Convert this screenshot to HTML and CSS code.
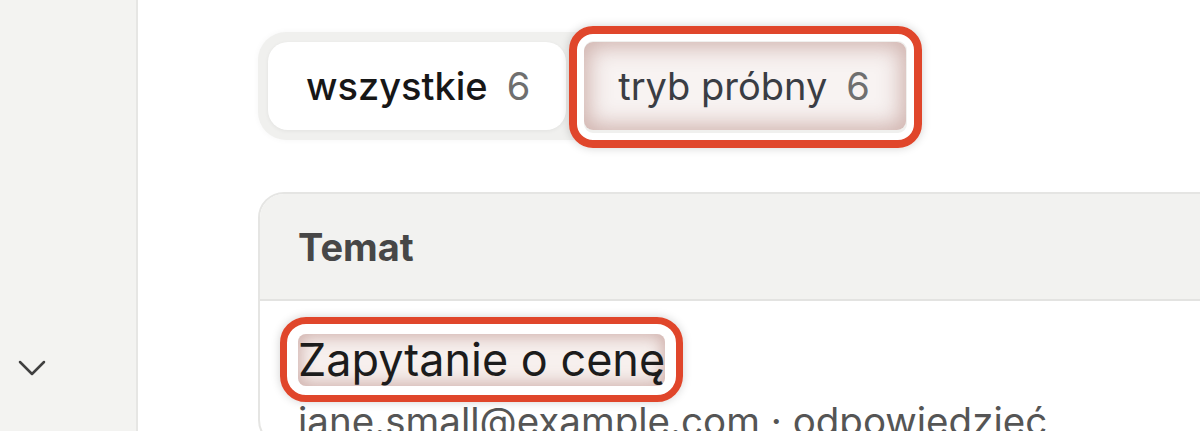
FILE: index.html
```html
<!DOCTYPE html>
<html lang="pl">
<head>
<meta charset="utf-8">
<title>Wiadomości</title>
<link rel="stylesheet" href="styles.css">
</head>
<body>
<div class="app">
  <aside class="sidebar">
    <button class="collapse" aria-label="Rozwiń">
      <svg viewBox="0 0 24 24" width="36" height="36"><path d="M4 8l8 8 8-8" fill="none" stroke="#404040" stroke-width="1.7" stroke-linecap="round" stroke-linejoin="round"/></svg>
    </button>
  </aside>
  <main class="main">
    <div class="tabs">
      <div class="tab tab-active">wszystkie <span class="count">6</span></div>
      <div class="tab tab-marked">tryb próbny <span class="count">6</span></div>
    </div>
    <section class="card">
      <div class="card-head">Temat</div>
      <div class="row">
        <div class="subject"><span class="marked">Zapytanie o cenę</span></div>
        <div class="meta">jane.small@example.com · odpowiedzieć</div>
      </div>
    </section>
  </main>
</div>
</body>
</html>
```
FILE: styles.css
```css
* { box-sizing: border-box; }
html, body { margin: 0; padding: 0; }
body {
  width: 1200px;
  height: 431px;
  overflow: hidden;
  background: #ffffff;
  font-family: Inter, "Noto Sans", sans-serif;
  color: #1c1c1c;
}
.app {
  display: flex;
  height: 431px;
}
.sidebar {
  width: 138px;
  flex: 0 0 138px;
  background: #f3f3f1;
  border-right: 2px solid #e6e6e4;
  display: flex;
  flex-direction: column;
  justify-content: flex-end;
  padding: 0 0 45px 14px;
}
.collapse {
  border: 0;
  background: transparent;
  padding: 0;
  width: 36px;
  height: 36px;
  display: flex;
}
.main {
  flex: 1;
  padding: 32px 0 0 120px;
  overflow: hidden;
}
.tabs {
  display: inline-flex;
  gap: 18px;
  padding: 10px;
  background: #f0f0ee;
  border-radius: 28px;
  box-shadow: 0 0 6px rgba(0,0,0,0.04);
}
.tab {
  height: 88px;
  display: flex;
  align-items: center;
  gap: 19px;
  padding: 0 36px 0 38px;
  font-size: 38px;
  border-radius: 20px;
  color: #3a3d44;
  white-space: nowrap;
}
.tab-active {
  background: #ffffff;
  color: #171717;
  font-weight: 500;
  box-shadow: 0 1px 4px rgba(0,0,0,0.06);
}
.count {
  color: #6f6f6f;
  font-weight: 400;
}
.tab-marked {
  position: relative;
  padding: 0 36px 0 34px;
  background: #f8f3f2;
  box-shadow: inset 0 0 22px 5px rgba(200,166,160,0.85);
  border-radius: 9px;
}
.tab-marked::after {
  content: "";
  position: absolute;
  left: -15px;
  right: -16px;
  top: -16px;
  bottom: -18px;
  border: 8px solid #e0462b;
  border-radius: 24px;
  box-shadow: 0 0 10px rgba(0,0,0,0.18), inset 0 0 0 7px #ffffff;
}
.card {
  margin-top: 52px;
  width: 1100px;
  border: 2px solid #e5e5e3;
  border-radius: 26px;
}
.card-head {
  background: #f2f2f0;
  border-radius: 24px 24px 0 0;
  height: 107px;
  border-bottom: 2px solid #e3e3e1;
  display: flex;
  align-items: center;
  padding-left: 38px;
  font-size: 38px;
  font-weight: 700;
  color: #474747;
}
.row {
  padding: 33px 0 0 38px;
}
.subject {
  font-size: 45px;
  line-height: 52px;
  color: #1c1c1c;
}
.marked {
  position: relative;
  display: inline-block;
  background: #f7f0ee;
  box-shadow: inset 0 0 16px 3px rgba(198,160,155,0.8);
  border-radius: 8px;
}
.marked::after {
  content: "";
  position: absolute;
  left: -18px;
  right: -18px;
  top: -17px;
  bottom: -16px;
  border: 7px solid #e0462b;
  border-radius: 26px;
  box-shadow: 0 0 10px rgba(0,0,0,0.18);
}
.meta {
  margin-top: 12px;
  font-size: 38.5px;
  color: #555555;
  white-space: nowrap;
}
```
